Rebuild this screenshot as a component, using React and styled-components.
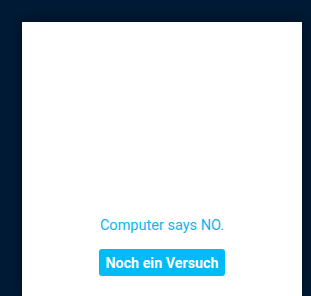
import React from 'react';
import styled, { createGlobalStyle } from 'styled-components';

const GlobalStyle = createGlobalStyle`
  html, body {
    margin: 0;
    padding: 0;
    background: #001a35;
    font-family: Roboto, "Liberation Sans", sans-serif;
    overflow: hidden;
  }
`;

const Page = styled.div`
  padding: 22px 9px 0 22px;
  height: 296px;
  box-sizing: border-box;
`;

const Card = styled.div`
  background: #ffffff;
  width: 280px;
  height: 274px;
  box-shadow: 0 0 14px rgba(0, 0, 0, 0.45);
  display: flex;
  flex-direction: column;
  align-items: center;
  padding-top: 195px;
  box-sizing: border-box;
`;

const Message = styled.p`
  margin: 0;
  color: #10b4f0;
  font-size: 14.5px;
  line-height: 18px;
`;

const RetryButton = styled.button`
  margin-top: 14px;
  background: #00bbf6;
  color: #ffffff;
  border: none;
  border-radius: 3px;
  height: 27px;
  padding: 0 6px;
  font-family: Roboto, "Liberation Sans", sans-serif;
  font-weight: 700;
  font-size: 14.3px;
  cursor: pointer;
`;

export default function App() {
  return (
    <>
      <GlobalStyle />
      <Page>
        <Card>
          <Message>Computer says NO.</Message>
          <RetryButton>Noch ein Versuch</RetryButton>
        </Card>
      </Page>
    </>
  );
}
